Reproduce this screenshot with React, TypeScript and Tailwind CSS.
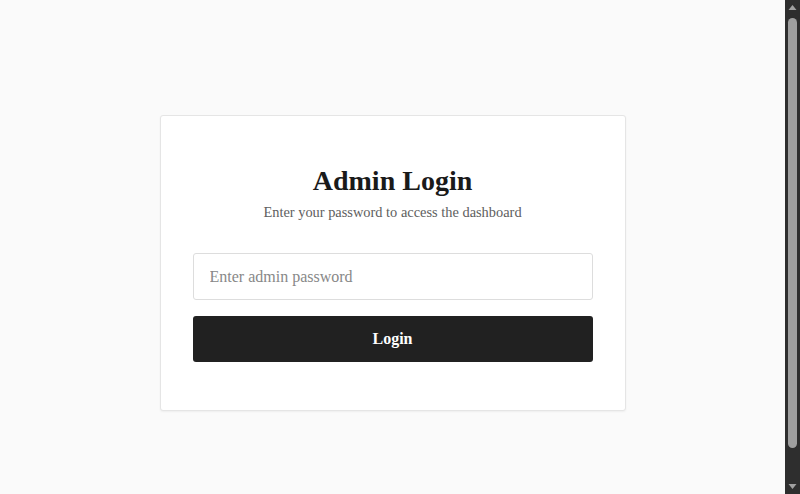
import { useState } from 'react';

const Scrollbar = () => (
  <div className="w-[15px] h-screen bg-[#2e2e2e] flex flex-col items-center shrink-0">
    <svg width="15" height="15" viewBox="0 0 15 15" className="shrink-0">
      <polygon points="3.5,10 7.5,5 11.5,10" fill="#a0a0a0" />
    </svg>
    <div className="w-[9px] h-[430px] mt-[3px] bg-[#9f9f9f] rounded-full" />
    <div className="flex-1" />
    <svg width="15" height="15" viewBox="0 0 15 15" className="shrink-0">
      <polygon points="3.5,5 11.5,5 7.5,10" fill="#a0a0a0" />
    </svg>
  </div>
);

const App = () => {
  const [password, setPassword] = useState('');

  const handleSubmit = (e: React.FormEvent) => {
    e.preventDefault();
  };

  return (
    <div className="flex h-screen overflow-hidden bg-[#fafafa] font-['Liberation_Serif',serif]">
      <div className="flex-1 flex items-center justify-center pt-[32px]">
        <div className="w-[466px] bg-white border border-[#e5e5e5] rounded-[3px] shadow-[0_1px_2px_rgba(0,0,0,0.05)] px-8 pt-12 pb-12">
          <h1 className="text-center text-[28px] leading-[34px] font-bold text-[#1a1a1a]">Admin Login</h1>
          <p className="mt-[5px] text-center text-[14.4px] leading-[18px] text-[#5e5e5e]">
            Enter your password to access the dashboard
          </p>
          <form onSubmit={handleSubmit} className="mt-[32px] flex flex-col gap-4">
            <input
              type="password"
              value={password}
              onChange={e => setPassword(e.target.value)}
              placeholder="Enter admin password"
              className="w-full h-[47px] px-4 text-base text-[#333] bg-white border border-[#dddddd] rounded-[3px] outline-none placeholder:text-[#888]"
            />
            <button
              type="submit"
              className="w-full h-[46px] bg-[#212121] text-white text-base font-bold rounded-[3px]"
            >
              Login
            </button>
          </form>
        </div>
      </div>
      <Scrollbar />
    </div>
  );
};

export default App;
